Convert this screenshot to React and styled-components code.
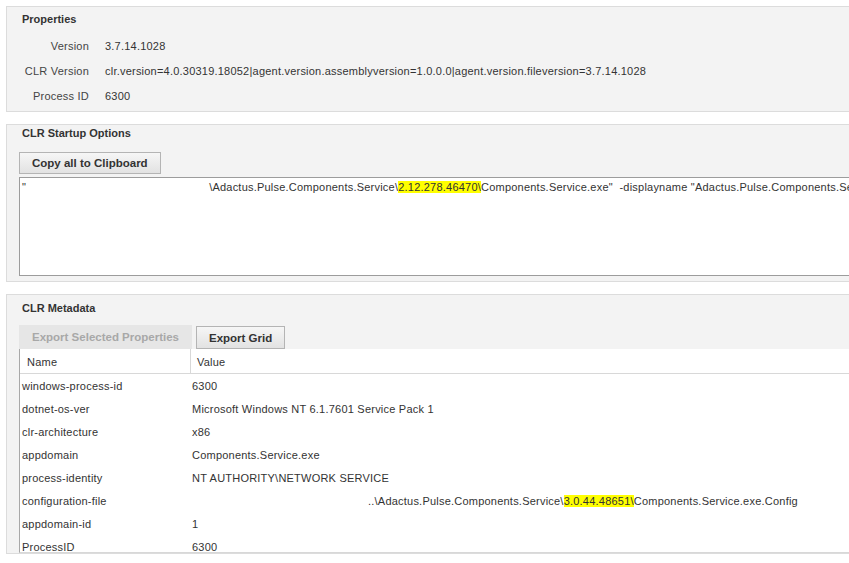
import React from "react";
import styled, { createGlobalStyle } from "styled-components";

const GlobalStyle = createGlobalStyle`
  html, body {
    margin: 0;
    padding: 0;
    background: #ffffff;
    overflow: hidden;
  }
  body {
    font-family: "Liberation Sans", Arial, sans-serif;
    font-size: 11px;
    letter-spacing: 0.22px;
    color: #333;
  }
`;

const Page = styled.div`
  display: flex;
  flex-direction: column;
  gap: 12px;
  padding: 6px 0 0 6px;
  width: 900px;
`;

const Panel = styled.section`
  display: flex;
  flex-direction: column;
  background: #f3f3f3;
  border: 1px solid #dcdcdc;
  border-right: none;
  height: ${(p) => p.$height}px;
  box-sizing: border-box;
  overflow: hidden;
`;

const Title = styled.h3`
  margin: 0;
  padding: ${(p) => p.$top}px 0 0 15px;
  height: ${(p) => p.$height}px;
  box-sizing: border-box;
  font-size: 11px;
  font-weight: bold;
  letter-spacing: 0;
  color: #333;
  line-height: 13px;
`;

const PropGrid = styled.div`
  display: grid;
  grid-template-columns: 82px 1fr;
  column-gap: 16px;
  grid-auto-rows: 25px;
  align-items: center;
`;

const PropLabel = styled.div`
  text-align: right;
  color: #444;
`;

const PropValue = styled.div`
  color: #333;
  white-space: nowrap;
`;

const Body = styled.div`
  display: flex;
  flex-direction: column;
  padding-left: 12px;
`;

const ButtonRow = styled.div`
  display: flex;
  gap: 4px;
  align-items: flex-end;
`;

const Button = styled.button`
  font-family: "Liberation Sans", Arial, sans-serif;
  font-size: 11.5px;
  font-weight: bold;
  letter-spacing: 0;
  height: ${(p) => p.$height || 22}px;
  padding: 0 ${(p) => p.$pad || 12}px;
  color: ${(p) => (p.disabled ? "#a8a8a8" : "#333")};
  background: ${(p) =>
    p.disabled ? "#e6e6e6" : "linear-gradient(#f6f6f6, #e2e2e2)"};
  border: 1px solid ${(p) => (p.disabled ? "#e6e6e6" : "#b4b4b4")};
  border-radius: 0;
  box-sizing: border-box;
  cursor: ${(p) => (p.disabled ? "default" : "pointer")};
`;

const TextBox = styled.div`
  margin-top: 3px;
  height: 99px;
  background: #fff;
  border: 1px solid #9c9c9c;
  box-sizing: border-box;
  padding: 2px 2px;
  white-space: nowrap;
  line-height: 14px;
  color: #333;
`;

const Redacted = styled.span`
  display: inline-block;
  width: ${(p) => p.$w}px;
`;

const Mark = styled.span`
  background: #ffff00;
`;

const Grid = styled.div`
  height: 204px;
  background: #fff;
  border-left: 1px solid #a8a8a8;
  border-bottom: 1px solid #d8d8d8;
  box-sizing: border-box;
  overflow: hidden;
`;

const HeaderRow = styled.div`
  display: grid;
  grid-template-columns: 171px 1fr;
  height: 25px;
  border-bottom: 1px solid #d8d8d8;
  box-sizing: border-box;
  align-items: center;
`;

const HeaderCell = styled.div`
  height: 100%;
  display: flex;
  align-items: center;
  padding-left: ${(p) => p.$pad}px;
  padding-top: 1px;
  border-right: ${(p) => (p.$divider ? "1px solid #d8d8d8" : "none")};
  box-sizing: border-box;
  color: #333;
`;

const Row = styled.div`
  display: grid;
  grid-template-columns: 170px 1fr;
  height: 23px;
  align-items: center;
  white-space: nowrap;
`;

const NameCell = styled.div`
  padding-left: 2px;
  color: #333;
`;

const ValueCell = styled.div`
  padding-left: 2px;
  color: #333;
`;

const properties = [
  ["Version", "3.7.14.1028"],
  [
    "CLR Version",
    "clr.version=4.0.30319.18052|agent.version.assemblyversion=1.0.0.0|agent.version.fileversion=3.7.14.1028",
  ],
  ["Process ID", "6300"],
];

const metadata = [
  ["windows-process-id", "6300"],
  ["dotnet-os-ver", "Microsoft Windows NT 6.1.7601 Service Pack 1"],
  ["clr-architecture", "x86"],
  ["appdomain", "Components.Service.exe"],
  ["process-identity", "NT AUTHORITY\\NETWORK SERVICE"],
  [
    "configuration-file",
    <>
      <Redacted $w={176} />
      ..\Adactus.Pulse.Components.Service\<Mark>3.0.44.48651\</Mark>
      Components.Service.exe.Config
    </>,
  ],
  ["appdomain-id", "1"],
  ["ProcessID", "6300"],
];

export default function App() {
  return (
    <>
      <GlobalStyle />
      <Page>
        <Panel $height={106}>
          <Title $top={6} $height={26}>
            Properties
          </Title>
          <PropGrid>
            {properties.map(([label, value]) => (
              <React.Fragment key={label}>
                <PropLabel>{label}</PropLabel>
                <PropValue>{value}</PropValue>
              </React.Fragment>
            ))}
          </PropGrid>
        </Panel>

        <Panel $height={158}>
          <Title $top={2} $height={27}>
            CLR Startup Options
          </Title>
          <Body>
            <ButtonRow>
              <Button>Copy all to Clipboard</Button>
            </ButtonRow>
            <TextBox>
              "<Redacted $w={183} />
              \Adactus.Pulse.Components.Service\<Mark>2.12.278.46470\</Mark>
              Components.Service.exe"&nbsp; -displayname
              "Adactus.Pulse.Components.Service"
            </TextBox>
          </Body>
        </Panel>

        <Panel $height={260}>
          <Title $top={7} $height={30}>
            CLR Metadata
          </Title>
          <Body>
            <ButtonRow>
              <Button disabled $height={24}>
                Export Selected Properties
              </Button>
              <Button $height={23}>Export Grid</Button>
            </ButtonRow>
            <Grid>
              <HeaderRow>
                <HeaderCell $pad={7} $divider>
                  Name
                </HeaderCell>
                <HeaderCell $pad={6}>Value</HeaderCell>
              </HeaderRow>
              {metadata.map(([name, value]) => (
                <Row key={name}>
                  <NameCell>{name}</NameCell>
                  <ValueCell>{value}</ValueCell>
                </Row>
              ))}
            </Grid>
          </Body>
        </Panel>
      </Page>
    </>
  );
}
